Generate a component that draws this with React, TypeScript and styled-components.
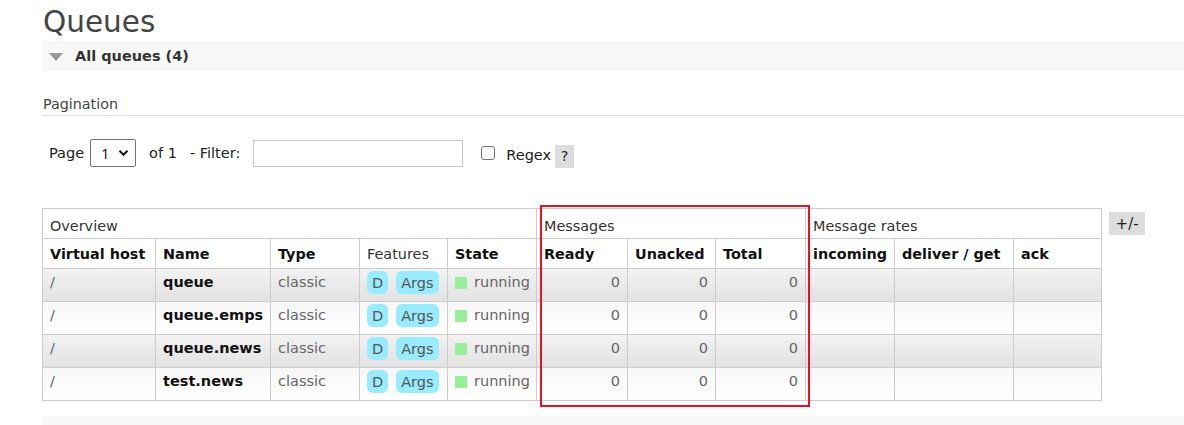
import React from "react";
import styled, { createGlobalStyle } from "styled-components";

const GlobalStyle = createGlobalStyle`
  html, body { margin: 0; padding: 0; background: #fff; }
  body {
    font-family: "DejaVu Sans", Verdana, sans-serif;
    font-size: 15px;
    color: #484848;
  }
  * { box-sizing: border-box; }
`;

const Page = styled.div`
  padding-left: 42px;
  width: 1184px;
  overflow: hidden;
`;

const Title = styled.h1`
  margin: 0;
  padding: 4px 0 0 1px;
  font-size: 29.5px;
  font-weight: normal;
  color: #444;
  line-height: 37px;
  height: 41px;
`;

const SectionBar = styled.div`
  height: 30px;
  background: #f8f8f8;
  display: flex;
  align-items: center;
  padding-left: 7px;
  gap: 12px;
`;

const Triangle = styled.span`
  width: 0;
  height: 0;
  border-left: 7px solid transparent;
  border-right: 7px solid transparent;
  border-top: 8px solid #999;
  margin-top: 2px;
`;

const SectionTitle = styled.span`
  font-weight: bold;
  font-size: 14.5px;
  color: #333;
`;

const SubHeading = styled.div`
  margin-top: 24px;
  padding-left: 1px;
  font-size: 14.3px;
  color: #444;
  line-height: 18px;
  padding-bottom: 2px;
  border-bottom: 1px solid #ddd;
`;

const FilterRow = styled.div`
  margin-top: 23px;
  height: 28px;
  display: flex;
  align-items: center;
  padding-left: 7px;
  font-size: 14.5px;
  color: #222;
`;

const Select = styled.div`
  width: 46px;
  height: 28px;
  margin-left: 6px;
  border: 1px solid #767676;
  border-radius: 2px;
  display: flex;
  align-items: center;
  justify-content: space-between;
  padding: 0 6px 0 10px;
  font-size: 15px;
  color: #111;
  font-family: "Open Sans", "DejaVu Sans", sans-serif;
`;

const Label = styled.span<{ $ml?: number; $mt?: number }>`
  margin-left: ${(p) => p.$ml ?? 0}px;
  margin-top: ${(p) => p.$mt ?? 0}px;
  white-space: nowrap;
`;

const TextInput = styled.div`
  width: 210px;
  height: 27px;
  margin-left: 13px;
  border: 1px solid #c8c8c8;
  background: #fff;
`;

const CheckBox = styled.span`
  width: 14px;
  height: 14px;
  margin-left: 18px;
  border: 1px solid #767676;
  border-radius: 3px;
  background: #fff;
`;

const HelpBox = styled.span`
  margin-left: 4px;
  width: 19px;
  height: 23px;
  background: #ddd;
  display: flex;
  align-items: center;
  justify-content: center;
  margin-top: 6px;
  font-size: 14.5px;
  color: #222;
`;

const TableArea = styled.div`
  margin-top: 41px;
  display: flex;
  align-items: flex-start;
  gap: 7px;
`;

const TableWrap = styled.div`
  position: relative;
`;

const Table = styled.table`
  border-collapse: collapse;
  table-layout: fixed;
  width: 1059px;
`;

const HeadCell = styled.th<{ $bold?: boolean }>`
  border: 1px solid #ccc;
  background: #fff;
  height: 30px;
  padding: 0 7px;
  text-align: left;
  font-size: 14.4px;
  white-space: nowrap;
  font-weight: ${(p) => (p.$bold ? "bold" : "normal")};
  color: ${(p) => (p.$bold ? "#111" : "#333")};
`;

const GroupCell = styled(HeadCell)`
  padding-left: 7px;
  padding-top: 4px;
`;

const Row = styled.tr<{ $odd: boolean }>`
  background: ${(p) =>
    p.$odd
      ? "linear-gradient(#f2f2f2, #e2e2e2)"
      : "linear-gradient(#f7f7f7, #ffffff)"};
`;

const Cell = styled.td<{ $align?: "left" | "right"; $bold?: boolean }>`
  border: 1px solid #ccc;
  height: 33px;
  padding: 3px 7px 0 7px;
  vertical-align: top;
  text-align: ${(p) => p.$align ?? "left"};
  font-size: 14.5px;
  line-height: 20px;
  white-space: nowrap;
  font-weight: ${(p) => (p.$bold ? "bold" : "normal")};
  color: ${(p) => (p.$bold ? "#111" : "#666")};
`;

const BadgeCell = styled.td`
  border: 1px solid #ccc;
  height: 33px;
  padding: 2px 0 0 7px;
  vertical-align: top;
  white-space: nowrap;
`;

const Badge = styled.span`
  display: inline-block;
  background: #99ebff;
  border-radius: 6px;
  padding: 0 5px;
  height: 23px;
  line-height: 25px;
  font-size: 14.5px;
  color: #555;
  margin-right: 8px;
`;

const StateWrap = styled.span`
  display: inline-flex;
  align-items: center;
  gap: 7px;
`;

const StateDot = styled.span`
  width: 12px;
  height: 12px;
  background: #99ee99;
  display: inline-block;
  margin-top: 2px;
`;

const ToggleButton = styled.div`
  margin-top: 4px;
  width: 36px;
  height: 23px;
  background: #ddd;
  display: flex;
  align-items: center;
  justify-content: center;
  font-size: 15px;
  color: #222;
`;

const Highlight = styled.div`
  position: absolute;
  left: 498px;
  top: -3px;
  width: 270px;
  height: 202px;
  border: 2px solid #e81123;
  pointer-events: none;
`;

const BottomBar = styled.div`
  margin-top: 15px;
  height: 20px;
  background: #f8f8f8;
`;

const colWidths = [113, 115, 89, 88, 89, 91, 88, 90, 89, 119, 88];

const queues = ["queue", "queue.emps", "queue.news", "test.news"];

const Chevron = () => (
  <svg width="11" height="8" viewBox="0 0 11 8">
    <path d="M1.5 1.8 L5.5 5.8 L9.5 1.8" fill="none" stroke="#111" strokeWidth="2" />
  </svg>
);

export default function App() {
  return (
    <>
      <GlobalStyle />
      <Page>
        <Title>Queues</Title>
        <SectionBar>
          <Triangle />
          <SectionTitle>All queues (4)</SectionTitle>
        </SectionBar>
        <SubHeading>Pagination</SubHeading>
        <FilterRow>
          <Label>Page</Label>
          <Select>
            <span>1</span>
            <Chevron />
          </Select>
          <Label $ml={13}>of 1</Label>
          <Label $ml={13}>- Filter:</Label>
          <TextInput />
          <CheckBox />
          <Label $ml={11} $mt={4}>Regex</Label>
          <HelpBox>?</HelpBox>
        </FilterRow>
        <TableArea>
          <TableWrap>
            <Table>
              <colgroup>
                {colWidths.map((w, i) => (
                  <col key={i} style={{ width: w }} />
                ))}
              </colgroup>
              <thead>
                <tr>
                  <GroupCell colSpan={5}>Overview</GroupCell>
                  <GroupCell colSpan={3}>Messages</GroupCell>
                  <GroupCell colSpan={3}>Message rates</GroupCell>
                </tr>
                <tr>
                  <HeadCell $bold>Virtual host</HeadCell>
                  <HeadCell $bold>Name</HeadCell>
                  <HeadCell $bold>Type</HeadCell>
                  <HeadCell>Features</HeadCell>
                  <HeadCell $bold>State</HeadCell>
                  <HeadCell $bold>Ready</HeadCell>
                  <HeadCell $bold>Unacked</HeadCell>
                  <HeadCell $bold>Total</HeadCell>
                  <HeadCell $bold>incoming</HeadCell>
                  <HeadCell $bold>deliver / get</HeadCell>
                  <HeadCell $bold>ack</HeadCell>
                </tr>
              </thead>
              <tbody>
                {queues.map((q, i) => (
                  <Row key={q} $odd={i % 2 === 0}>
                    <Cell>/</Cell>
                    <Cell $bold>{q}</Cell>
                    <Cell>classic</Cell>
                    <BadgeCell>
                      <Badge>D</Badge>
                      <Badge>Args</Badge>
                    </BadgeCell>
                    <Cell>
                      <StateWrap>
                        <StateDot />
                        running
                      </StateWrap>
                    </Cell>
                    <Cell $align="right">0</Cell>
                    <Cell $align="right">0</Cell>
                    <Cell $align="right">0</Cell>
                    <Cell />
                    <Cell />
                    <Cell />
                  </Row>
                ))}
              </tbody>
            </Table>
            <Highlight />
          </TableWrap>
          <ToggleButton>+/-</ToggleButton>
        </TableArea>
        <BottomBar />
      </Page>
    </>
  );
}
